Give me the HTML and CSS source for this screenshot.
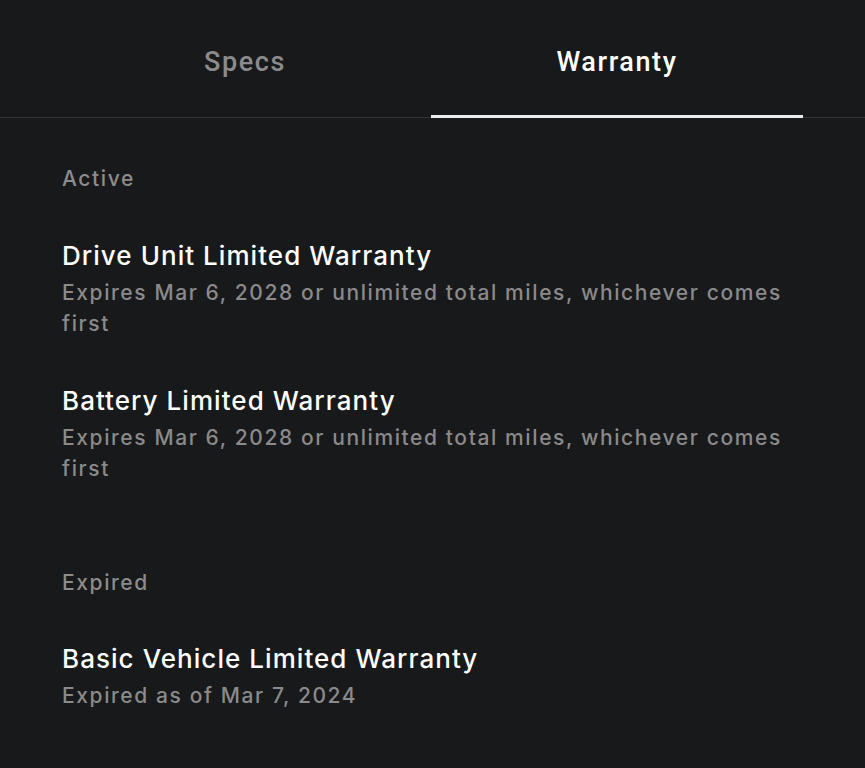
FILE: index.html
```html
<!DOCTYPE html>
<html>
<head>
<meta charset="utf-8">
<link rel="stylesheet" href="styles.css">
</head>
<body>
<div class="page">
  <nav class="tabs">
    <div class="tab">Specs</div>
    <div class="tab active">Warranty</div>
  </nav>
  <section class="group">
    <div class="group-label">Active</div>
    <div class="item">
      <div class="item-title">Drive Unit Limited Warranty</div>
      <div class="item-sub">Expires Mar 6, 2028 or unlimited total miles, whichever comes first</div>
    </div>
    <div class="item">
      <div class="item-title">Battery Limited Warranty</div>
      <div class="item-sub">Expires Mar 6, 2028 or unlimited total miles, whichever comes first</div>
    </div>
  </section>
  <section class="group expired">
    <div class="group-label">Expired</div>
    <div class="item">
      <div class="item-title">Basic Vehicle Limited Warranty</div>
      <div class="item-sub">Expired as of Mar 7, 2024</div>
    </div>
  </section>
</div>
</body>
</html>
```
FILE: styles.css
```css
html, body {
  margin: 0;
  padding: 0;
  background: #18191b;
}
body {
  font-family: Inter, "Noto Sans", sans-serif;
  color: #fff;
  width: 865px;
  height: 768px;
  overflow: hidden;
}
.tabs {
  display: grid;
  grid-template-columns: 1fr 1fr;
  padding: 0 62px 0 59px;
  border-bottom: 1px solid #333538;
}
.tab {
  height: 118px;
  box-sizing: border-box;
  padding-top: 46px;
  text-align: center;
  font-family: "Roboto", sans-serif;
  font-size: 27px;
  font-weight: 500;
  letter-spacing: 1.6px;
  color: #8b8b8c;
  border-bottom: 3px solid transparent;
  margin-bottom: -1px;
}
.tab.active {
  color: #fff;
  border-bottom-color: #ececec;
}
.group {
  padding: 0 62px;
}
.group-label {
  margin-top: 47px;
  font-size: 21px;
  font-weight: 500;
  color: #8c8c8d;
  line-height: 28px;
  letter-spacing: 1.6px;
}
.item {
  margin-top: 46px;
}
.item + .item {
  margin-top: 45px;
}
.item-title {
  font-size: 26px;
  font-weight: 500;
  line-height: 34px;
  color: #fff;
  letter-spacing: 1.05px;
}
.item-sub {
  margin-top: 4px;
  font-size: 21px;
  line-height: 31px;
  color: #8a8a8b;
  font-weight: 500;
  letter-spacing: 1.6px;
}
.expired .group-label {
  margin-top: 85px;
}
.expired .item {
  margin-top: 45px;
}
```
